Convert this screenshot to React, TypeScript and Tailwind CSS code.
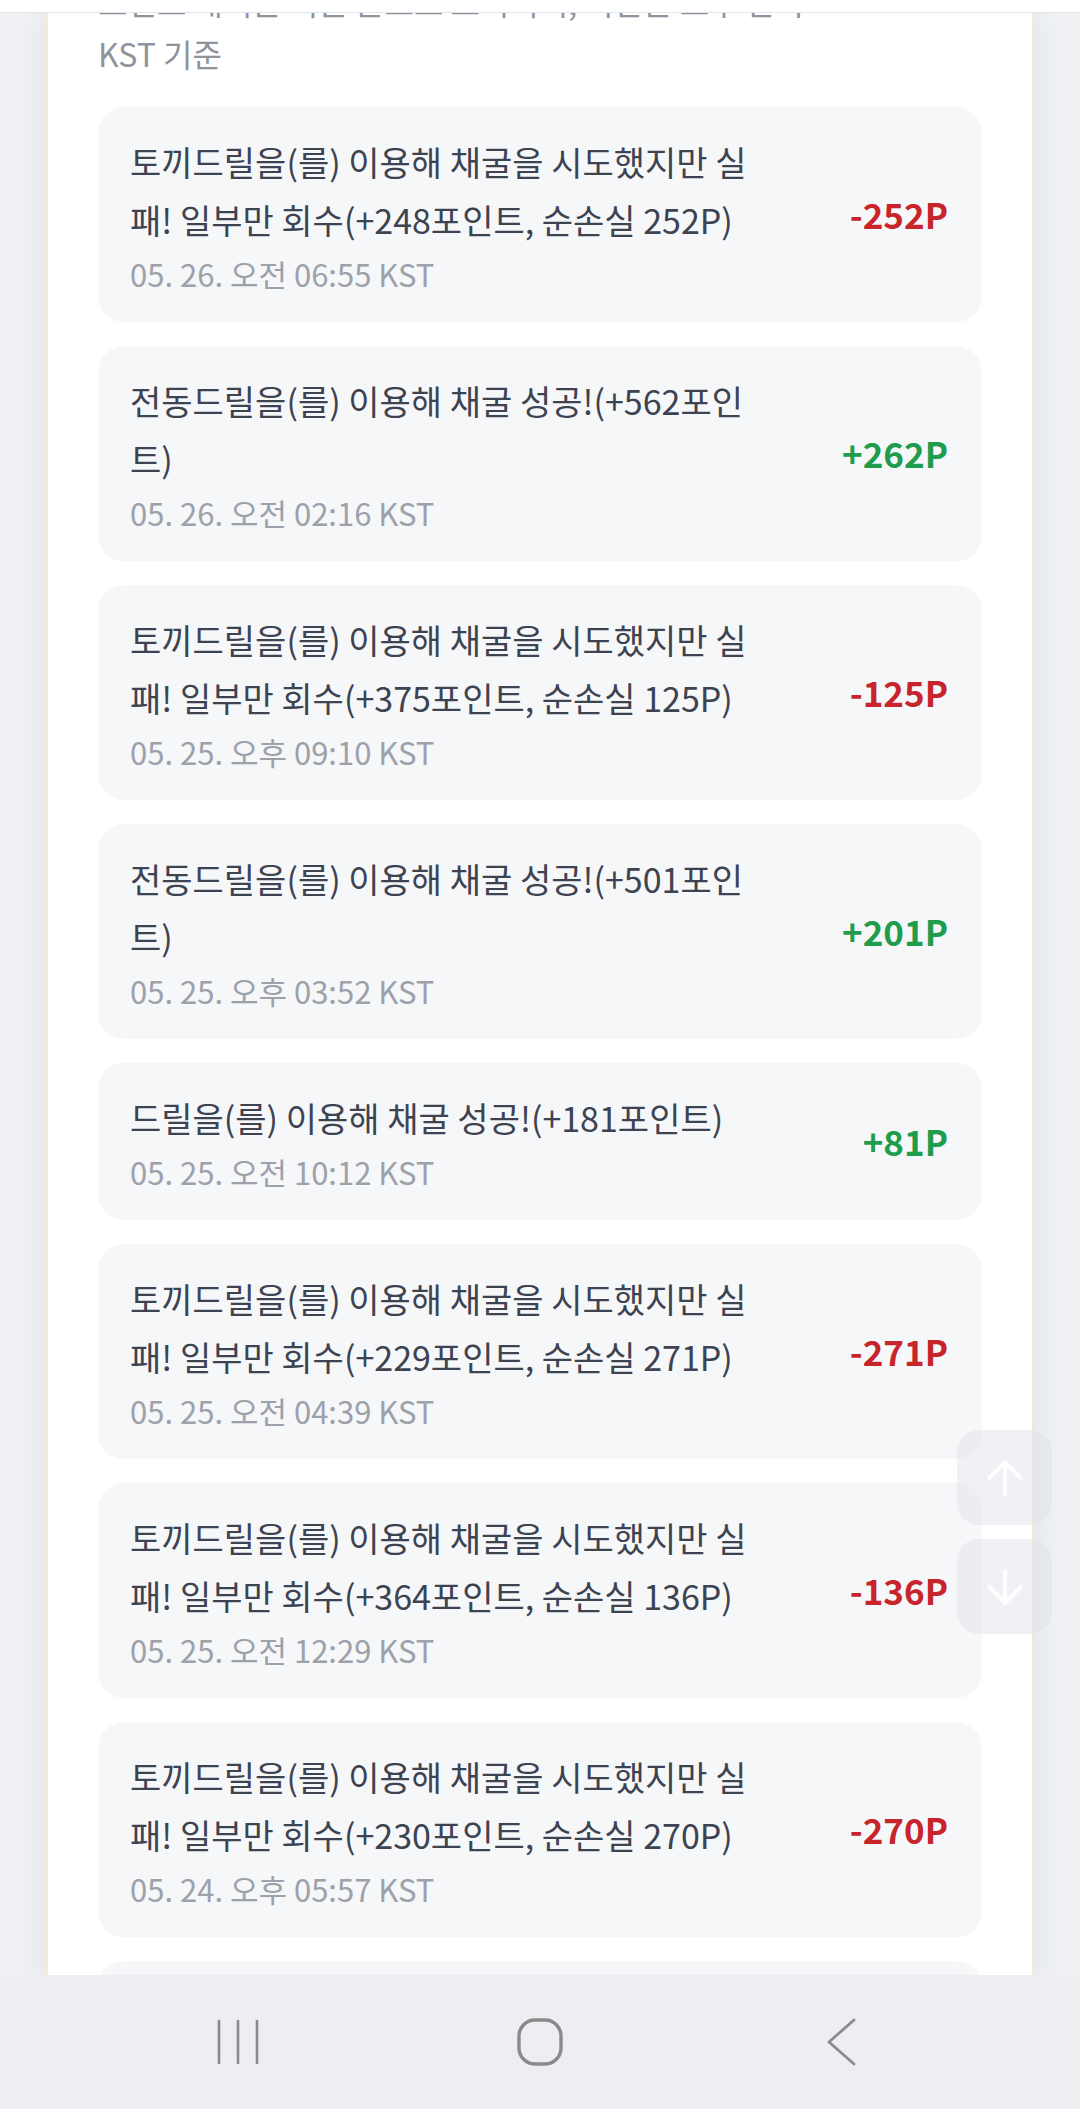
import { ArrowUp, ArrowDown } from "lucide-react";

type Entry = {
  lines: string[];
  date: string;
  amount: string;
};

const entries: Entry[] = [
  {
    lines: ["토끼드릴을(를) 이용해 채굴을 시도했지만 실", "패! 일부만 회수(+248포인트, 순손실 252P)"],
    date: "05. 26. 오전 06:55 KST",
    amount: "-252P",
  },
  {
    lines: ["전동드릴을(를) 이용해 채굴 성공!(+562포인", "트)"],
    date: "05. 26. 오전 02:16 KST",
    amount: "+262P",
  },
  {
    lines: ["토끼드릴을(를) 이용해 채굴을 시도했지만 실", "패! 일부만 회수(+375포인트, 순손실 125P)"],
    date: "05. 25. 오후 09:10 KST",
    amount: "-125P",
  },
  {
    lines: ["전동드릴을(를) 이용해 채굴 성공!(+501포인", "트)"],
    date: "05. 25. 오후 03:52 KST",
    amount: "+201P",
  },
  {
    lines: ["드릴을(를) 이용해 채굴 성공!(+181포인트)"],
    date: "05. 25. 오전 10:12 KST",
    amount: "+81P",
  },
  {
    lines: ["토끼드릴을(를) 이용해 채굴을 시도했지만 실", "패! 일부만 회수(+229포인트, 순손실 271P)"],
    date: "05. 25. 오전 04:39 KST",
    amount: "-271P",
  },
  {
    lines: ["토끼드릴을(를) 이용해 채굴을 시도했지만 실", "패! 일부만 회수(+364포인트, 순손실 136P)"],
    date: "05. 25. 오전 12:29 KST",
    amount: "-136P",
  },
  {
    lines: ["토끼드릴을(를) 이용해 채굴을 시도했지만 실", "패! 일부만 회수(+230포인트, 순손실 270P)"],
    date: "05. 24. 오후 05:57 KST",
    amount: "-270P",
  },
  {
    lines: ["토끼드릴을(를) 이용해 채굴을 시도했지만 실", "패! 일부만 회수(+412포인트, 순손실 88P)"],
    date: "05. 24. 오전 11:03 KST",
    amount: "-88P",
  },
];

function HistoryCard({ entry }: { entry: Entry }) {
  const gain = entry.amount.startsWith("+");
  return (
    <div className="flex items-center rounded-[26px] bg-[#f6f7f9] pl-[32px] pr-[34px] py-[26px]">
      <div className="flex-1">
        {entry.lines.map((line) => (
          <p key={line} className="text-[34px] leading-[58px] text-[#3d4350] whitespace-nowrap">
            {line}
          </p>
        ))}
        <p className="mt-[3px] text-[31px] leading-[44px] text-[#9ca1aa]">{entry.date}</p>
      </div>
      <span
        className={
          gain
            ? "text-[35px] font-bold text-[#1f9c4c]"
            : "text-[35px] font-bold text-[#c8242b]"
        }
      >
        {entry.amount}
      </span>
    </div>
  );
}

export default function App() {
  return (
    <div
      className="relative flex flex-col h-[2109px] w-[1080px] overflow-hidden bg-[#eff1f4]"
      style={{ fontFamily: '"Noto Sans CJK KR", "Noto Sans", sans-serif' }}
    >
      {/* sticky header edge */}
      <div className="absolute top-0 left-0 right-0 z-10 h-[13px] bg-white border-b border-[#e3e5e9]" />

      <main className="flex-1 overflow-hidden">
        <section className="flow-root mx-[46px] min-h-full bg-white border-x-2 border-[#f6ead7] px-[50px] shadow-[0_0_28px_rgba(60,70,90,0.07)]">
          <p className="-mt-[25px] text-[32px] leading-[52px] text-[#8e939c]">
            포인트 내역은 최근 순으로 표시되며, 시간은 모두 한국
            <br />
            KST 기준
          </p>
          <div className="mt-[28px] flex flex-col gap-[24px]">
            {entries.map((e, i) => (
              <HistoryCard key={i} entry={e} />
            ))}
          </div>
        </section>
      </main>

      {/* floating scroll buttons */}
      <div className="absolute left-[957px] top-[1430px] flex flex-col gap-[14px]">
        <button className="flex h-[95px] w-[95px] items-center justify-center rounded-[22px] bg-[rgba(222,225,230,0.45)]">
          <ArrowUp size={54} strokeWidth={1.8} color="rgba(255,255,255,0.9)" />
        </button>
        <button className="flex h-[95px] w-[95px] items-center justify-center rounded-[22px] bg-[rgba(222,225,230,0.45)]">
          <ArrowDown size={54} strokeWidth={1.8} color="rgba(255,255,255,0.9)" />
        </button>
      </div>

      {/* android nav bar */}
      <nav className="flex h-[134px] shrink-0 items-center justify-center bg-[#eceef1]">
        <div className="flex w-[302px] justify-center">
          <svg width="44" height="46" viewBox="0 0 44 46" fill="none" stroke="#8a8a8a" strokeWidth="2.6" strokeLinecap="round">
            <line x1="3" y1="2" x2="3" y2="44" />
            <line x1="22" y1="2" x2="22" y2="44" />
            <line x1="41" y1="2" x2="41" y2="44" />
          </svg>
        </div>
        <div className="flex w-[302px] justify-center">
          <svg width="48" height="48" viewBox="0 0 48 48" fill="none" stroke="#8a8a8a" strokeWidth="3.4">
            <rect x="3" y="2" width="42" height="44" rx="16" />
          </svg>
        </div>
        <div className="flex w-[302px] justify-center">
          <svg width="32" height="48" viewBox="0 0 32 48" fill="none" stroke="#8a8a8a" strokeWidth="2.8" strokeLinecap="round" strokeLinejoin="round">
            <polyline points="28,2 3,24 28,46" />
          </svg>
        </div>
      </nav>
    </div>
  );
}
